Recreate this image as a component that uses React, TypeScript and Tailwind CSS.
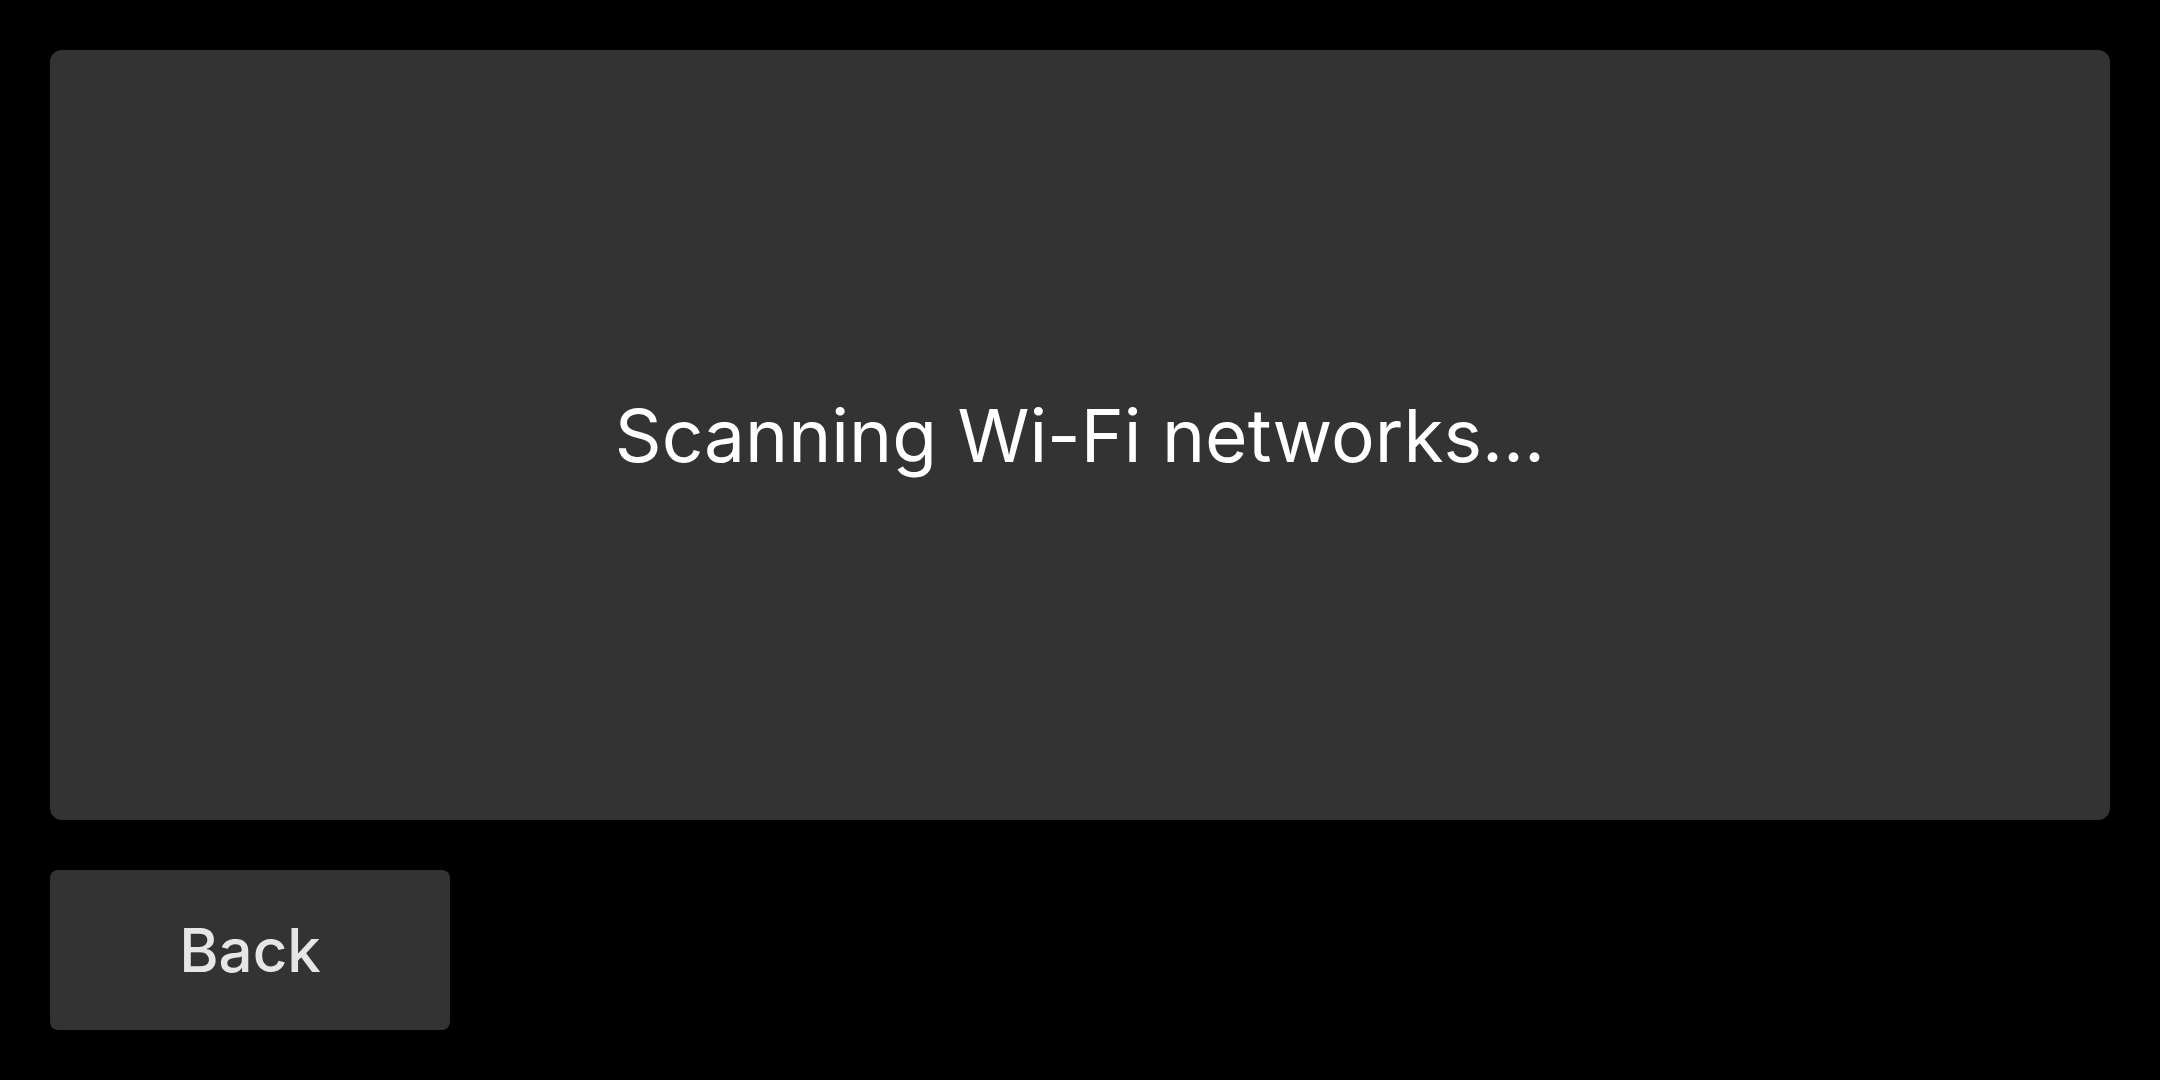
export default function App() {
  return (
    <div
      className="flex h-[1080px] w-[2160px] flex-col gap-[50px] bg-black p-[50px]"
      style={{ fontFamily: "Inter, 'Noto Sans', sans-serif" }}
    >
      {/* Status panel */}
      <div className="flex flex-1 items-center justify-center rounded-xl bg-[#333333]">
        <p className="text-[73px] leading-none text-white">Scanning Wi-Fi networks...</p>
      </div>

      {/* Actions */}
      <div className="flex">
        <button className="flex h-[160px] w-[400px] items-center justify-center rounded-lg bg-[#333333] text-[60px] font-medium text-[#e6e6e6]">
          Back
        </button>
      </div>
    </div>
  )
}
